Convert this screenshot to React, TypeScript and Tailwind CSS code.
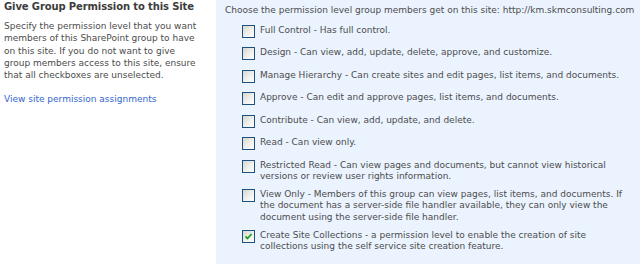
import React from 'react';

type Level = {
    lines: string[];
    checked?: boolean;
};

const levels: Level[] = [
    { lines: ['Full Control - Has full control.'] },
    { lines: ['Design - Can view, add, update, delete, approve, and customize.'] },
    { lines: ['Manage Hierarchy - Can create sites and edit pages, list items, and documents.'] },
    { lines: ['Approve - Can edit and approve pages, list items, and documents.'] },
    { lines: ['Contribute - Can view, add, update, and delete.'] },
    { lines: ['Read - Can view only.'] },
    {
        lines: [
            'Restricted Read - Can view pages and documents, but cannot view historical',
            'versions or review user rights information.',
        ],
    },
    {
        lines: [
            'View Only - Members of this group can view pages, list items, and documents. If',
            'the document has a server-side file handler available, they can only view the',
            'document using the server-side file handler.',
        ],
    },
    {
        lines: [
            'Create Site Collections - a permission level to enable the creation of site',
            'collections using the self service site creation feature.',
        ],
        checked: true,
    },
];

const Checkbox: React.FC<{ checked?: boolean }> = ({ checked }) => (
    <div className="my-[2.25px] flex h-[13px] w-[13px] shrink-0 items-center justify-center border border-[#1c5180] bg-gradient-to-br from-[#d6d6cf] via-[#eeeeea] to-white">
        {checked && (
            <svg width="9" height="9" viewBox="0 0 9 9">
                <path d="M1.5 4.5 L3.5 6.5 L7.5 2" fill="none" stroke="#21a121" strokeWidth="1.8" />
            </svg>
        )}
    </div>
);

const App: React.FC = () => {
    return (
        <div className="flex h-[264px] w-[640px] overflow-hidden bg-white font-['DejaVu_Sans',sans-serif] text-[9px] text-[#4c4c4c]">
            <div className="w-[216px] shrink-0 pl-[4px] pt-[1px]">
                <h3 className="whitespace-nowrap text-[10px] font-bold leading-[12px] tracking-[-0.12px] text-[#3c3c3c]">
                    Give Group Permission to this Site
                </h3>
                <div className="mt-[7px] leading-[12.3px]">
                    <div className="whitespace-nowrap">Specify the permission level that you want</div>
                    <div className="whitespace-nowrap">members of this SharePoint group to have</div>
                    <div className="whitespace-nowrap">on this site. If you do not want to give</div>
                    <div className="whitespace-nowrap">group members access to this site, ensure</div>
                    <div className="whitespace-nowrap">that all checkboxes are unselected.</div>
                </div>
                <a className="mt-[12px] block whitespace-nowrap leading-[12px] text-[#3366cc]">
                    View site permission assignments
                </a>
            </div>

            <div className="flex-1 bg-[#ebf3ff] pl-[9px] pt-[4px]">
                <div className="whitespace-nowrap leading-[12px]">
                    Choose the permission level group members get on this site: http://km.skmconsulting.com
                </div>
                <div className="mt-[4px] pl-[17px]">
                    {levels.map((level, i) => (
                        <div key={i} className="flex items-start gap-[5px] py-[2.5px]">
                            <Checkbox checked={level.checked} />
                            <div className="pt-[2px] leading-[11.25px]">
                                {level.lines.map((line, j) => (
                                    <div key={j} className="whitespace-nowrap">
                                        {line}
                                    </div>
                                ))}
                            </div>
                        </div>
                    ))}
                </div>
            </div>
        </div>
    );
};

export default App;
